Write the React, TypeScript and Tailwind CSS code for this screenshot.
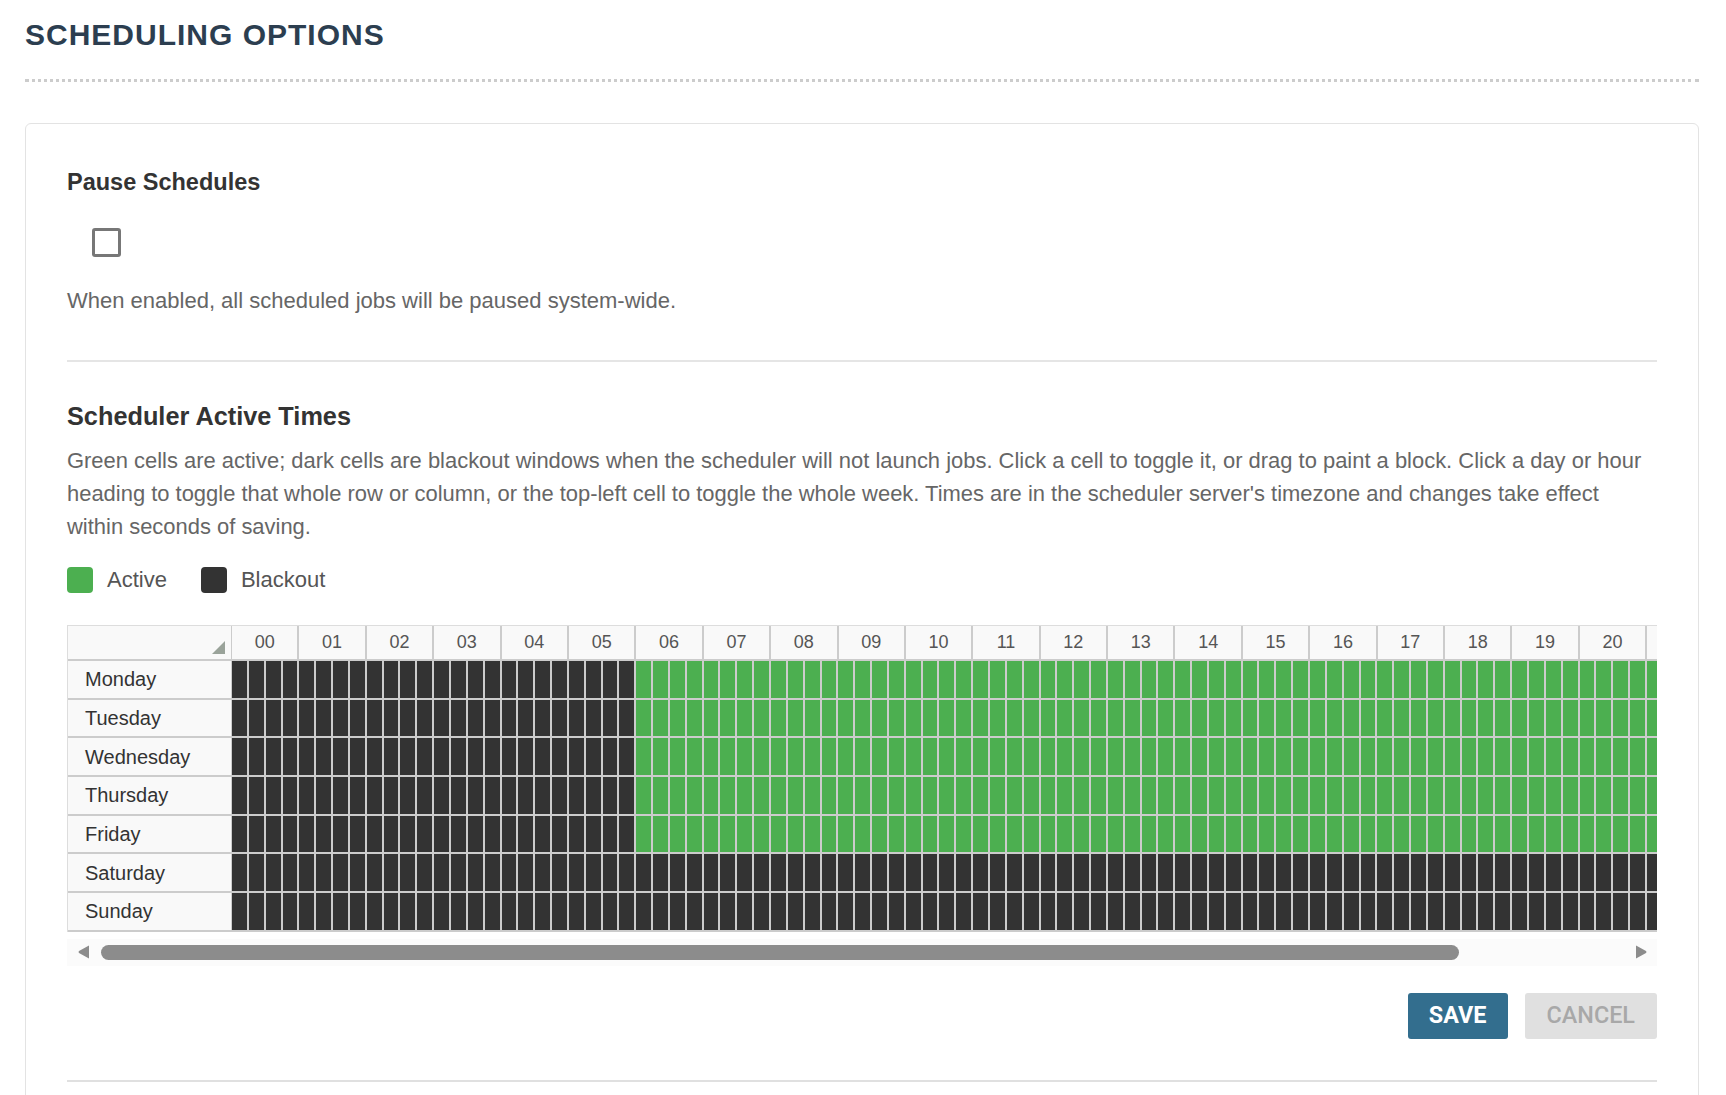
import React, { useState } from 'react'

const DAYS = ['Monday', 'Tuesday', 'Wednesday', 'Thursday', 'Friday', 'Saturday', 'Sunday']
const HOURS = Array.from({ length: 24 }, (_, h) => String(h).padStart(2, '0'))

// 15-minute slots per day; weekdays run 06:00-22:00, weekends are blacked out
function initialGrid(): boolean[][] {
  return DAYS.map((_, d) =>
    Array.from({ length: 96 }, (_, s) => d < 5 && s >= 24 && s < 88)
  )
}

function Legend() {
  return (
    <div className="flex items-center h-[26px] mt-[24px] text-[22px] text-[#555] leading-[26px]">
      <span className="w-[26px] h-[26px] rounded-[4px] bg-[#4caf50]" />
      <span className="ml-[14px]">Active</span>
      <span className="ml-[34px] w-[26px] h-[26px] rounded-[4px] bg-[#333333]" />
      <span className="ml-[14px]">Blackout</span>
    </div>
  )
}

// horizontal scroll bar drawn under the grid
function ScrollBar() {
  return (
    <div className="mt-[7px] h-[27px] bg-[#fbfbfb] flex items-center">
      <svg className="ml-[11px] shrink-0" width="12" height="14" viewBox="0 0 12 14">
        <path d="M11 0.5 L11 13.5 L1 8 Q0 7 1 6 Z" fill="#8c8c8c" />
      </svg>
      <div className="ml-[11px] w-[1358px] h-[15px] rounded-full bg-[#8c8c8c]" />
      <div className="flex-1" />
      <svg className="mr-[10px] shrink-0" width="12" height="14" viewBox="0 0 12 14">
        <path d="M1 0.5 L1 13.5 L11 8 Q12 7 11 6 Z" fill="#8c8c8c" />
      </svg>
    </div>
  )
}

function ScheduleGrid({ grid, onToggle }: { grid: boolean[][]; onToggle: (d: number, s: number) => void }) {
  return (
    <div className="mt-[32px]">
      <div className="overflow-x-auto [scrollbar-width:none]">
        <div className="w-max border-l border-t border-[#dddddd]">
          {/* hour headings */}
          <div className="flex h-[35px]">
            <div className="relative w-[164px] shrink-0 bg-[#f9f9f9] border-r border-b-2 border-[#cccccc]">
              <svg className="absolute right-[6px] bottom-[5px]" width="13" height="13" viewBox="0 0 13 13">
                <polygon points="13,0 13,13 0,13" fill="#9aa39a" />
              </svg>
            </div>
            {HOURS.map((h) => (
              <div
                key={h}
                className="w-[67.4px] shrink-0 bg-[#f9f9f9] border-r-2 border-b-2 border-[#cccccc] flex items-center justify-center text-[18px] text-[#555]"
              >
                {h}
              </div>
            ))}
          </div>

          {DAYS.map((day, d) => (
            <div key={day} className="flex h-[38.67px]">
              <div className="w-[164px] shrink-0 bg-[#f9f9f9] border-r border-b-2 border-[#cccccc] flex items-center pl-[17px] text-[20px] text-[#333]">
                {day}
              </div>
              {grid[d].map((on, s) => (
                <div
                  key={s}
                  onClick={() => onToggle(d, s)}
                  className={`w-[16.85px] shrink-0 border-r-2 border-b-2 border-[#cccccc] cursor-pointer ${on ? 'bg-[#4caf50]' : 'bg-[#333333]'}`}
                />
              ))}
            </div>
          ))}
        </div>
      </div>
      <ScrollBar />
    </div>
  )
}

export default function App() {
  const [paused, setPaused] = useState(false)
  const [grid, setGrid] = useState(initialGrid)

  const toggle = (d: number, s: number) =>
    setGrid((g) => g.map((row, i) => (i === d ? row.map((v, j) => (j === s ? !v : v)) : row)))

  return (
    <div className="min-h-screen bg-white pl-[25px] pr-[27px] pt-[17px] font-['Liberation_Sans',Arial,sans-serif]">
      <h1 className="text-[30px] leading-[36px] font-bold tracking-[1px] text-[#2c3e50] pb-[26px] border-b-[3px] border-dotted border-[#cccccc]">
        SCHEDULING OPTIONS
      </h1>

      <div className="mt-[41px] border border-[#e3e3e3] rounded-[6px] px-[41px] pt-[46px] pb-[60px]">
        {/* Pause */}
        <h4 className="text-[23.5px] leading-[25px] font-bold text-[#333]">Pause Schedules</h4>
        <button
          onClick={() => setPaused(!paused)}
          className="block mt-[33px] ml-[25px] w-[29px] h-[29px] border-[3px] border-[#777777] rounded-[3px] bg-white"
        />
        <p className="mt-[27px] text-[22px] leading-[33px] text-[#666]">
          When enabled, all scheduled jobs will be paused system-wide.
        </p>

        <div className="mt-[43px] border-t-2 border-[#e5e5e5]" />

        {/* Active times */}
        <h4 className="mt-[42px] text-[25.3px] leading-[25px] font-bold text-[#333]">Scheduler Active Times</h4>
        <p className="mt-[15px] text-[21.95px] leading-[33px] text-[#666]">
          Green cells are active; dark cells are blackout windows when the scheduler will not launch jobs. Click a cell to
          toggle it, or drag to paint a block. Click a day or hour heading to toggle that whole row or column, or the
          top-left cell to toggle the whole week. Times are in the scheduler server's timezone and changes take effect
          within seconds of saving.
        </p>

        <Legend />
        <ScheduleGrid grid={grid} onToggle={toggle} />

        <div className="mt-[27px] flex justify-end gap-[17px] font-['Roboto',sans-serif]">
          <button className="h-[46px] px-[21px] rounded-[3px] bg-[#336e8e] text-white text-[23.4px] font-bold">
            SAVE
          </button>
          <button className="h-[46px] px-[22px] rounded-[3px] bg-[#e0e0e0] text-[#a8a8a8] text-[23.4px] font-medium">
            CANCEL
          </button>
        </div>

        <div className="mt-[41px] border-t-2 border-[#e0e0e0]" />
      </div>
    </div>
  )
}
